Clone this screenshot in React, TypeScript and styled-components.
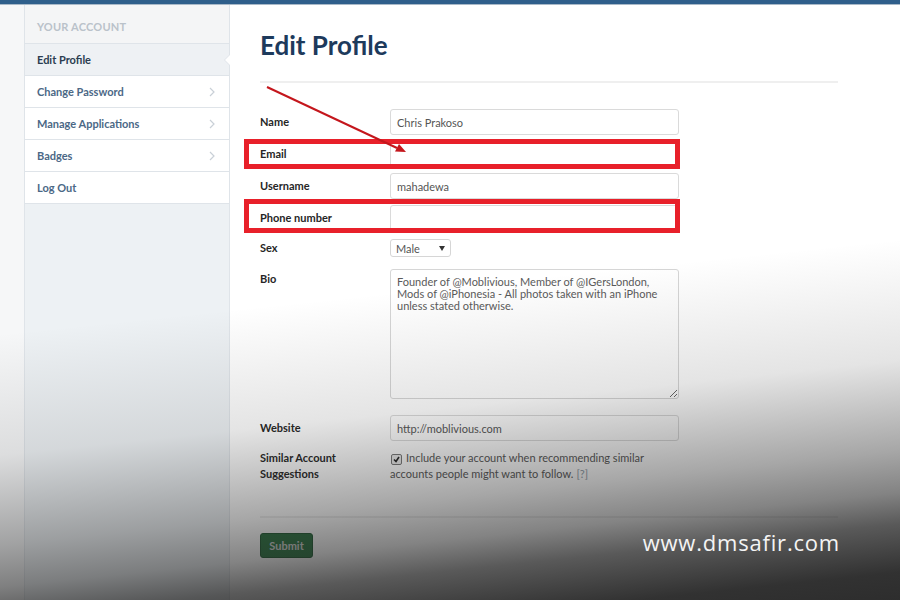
import React from "react";
import styled, { createGlobalStyle } from "styled-components";

const GlobalStyle = createGlobalStyle`
  html, body {
    margin: 0;
    padding: 0;
  }
  body {
    font-family: Lato, "Open Sans", "Liberation Sans", sans-serif;
    background: #f6f7f8;
  }
`;

const Screen = styled.div`
  position: relative;
  width: 900px;
  height: 600px;
  overflow: hidden;
  display: flex;
  flex-direction: column;
  background: #f6f7f8;
`;

const TopBar = styled.div`
  flex-shrink: 0;
  height: 4px;
  background: #2f5f8b;
  border-bottom: 1px solid #a9b9c8;
`;

const Layout = styled.div`
  flex: 1;
  display: flex;
  padding-left: 24px;
`;

const Sidebar = styled.nav`
  width: 204px;
  background: #edf1f4;
  border-left: 1px solid #dfe4e9;
  border-right: 1px solid #dfe4e9;
`;

const SideHeader = styled.div`
  height: 38px;
  box-sizing: border-box;
  padding: 6px 0 0 12px;
  line-height: 32px;
  background: #f4f5f6;
  color: #bac2ca;
  font-size: 11px;
  font-weight: 700;
  text-transform: uppercase;
  letter-spacing: 0.2px;
`;

const NavItem = styled.div<{ $active?: boolean }>`
  position: relative;
  height: 31px;
  display: flex;
  align-items: center;
  justify-content: space-between;
  padding: 0 14px 0 12px;
  border-top: 1px solid #dfe4e9;
  background: ${({ $active }) => ($active ? "#eef1f4" : "#ffffff")};
  color: ${({ $active }) => ($active ? "#2b3d50" : "#4b6886")};
  font-size: 11px;
  font-weight: 700;

  &:last-child {
    border-bottom: 1px solid #dfe4e9;
  }

  /* little notch pointing at the open page */
  ${({ $active }) =>
    $active &&
    `
    &::before,
    &::after {
      content: "";
      position: absolute;
      top: 50%;
      border-style: solid;
      border-color: transparent;
    }
    &::before {
      right: -1px;
      margin-top: -6px;
      border-width: 6px 6px 6px 0;
      border-right-color: #dfe4e9;
    }
    &::after {
      right: -1px;
      margin-top: -5px;
      border-width: 5px 5px 5px 0;
      border-right-color: #ffffff;
    }
  `}
`;

const Chevron = () => (
  <svg width="6" height="10" viewBox="0 0 6 10">
    <polyline
      points="1,1 5,5 1,9"
      fill="none"
      stroke="#c9d0d7"
      strokeWidth="1.2"
    />
  </svg>
);

const Main = styled.main`
  flex: 1;
  background: #ffffff;
  padding: 0 62px 0 30px;
`;

const Title = styled.h1`
  margin: 24px 0 0;
  line-height: 32px;
  font-size: 26px;
  font-weight: 700;
  color: #1d3a5c;
`;

const Divider = styled.div<{ $top: number }>`
  height: 2px;
  margin-top: ${({ $top }) => $top}px;
  background: #efefef;
`;

const Field = styled.div<{ $gap: number; $top?: boolean }>`
  position: relative;
  width: 419px;
  display: flex;
  align-items: ${({ $top }) => ($top ? "flex-start" : "center")};
  margin-top: ${({ $gap }) => $gap}px;
`;

const Label = styled.div<{ $pad?: number }>`
  width: 130px;
  flex-shrink: 0;
  padding-top: ${({ $pad }) => $pad || 0}px;
  font-size: 11px;
  line-height: 16px;
  font-weight: 700;
  color: #262626;
`;

const TextInput = styled.div`
  width: 289px;
  height: 26px;
  box-sizing: border-box;
  display: flex;
  align-items: center;
  padding: 0 6px;
  border: 1px solid #dadada;
  border-radius: 3px;
  background: #ffffff;
  font-size: 11px;
  color: #555555;
`;

const SelectBox = styled.div`
  width: 61px;
  height: 18px;
  box-sizing: border-box;
  display: flex;
  align-items: center;
  justify-content: space-between;
  padding: 0 5px;
  border: 1px solid #d6d6d6;
  border-radius: 3px;
  background: #ffffff;
  font-size: 11px;
  color: #555555;
`;

const Caret = styled.span`
  width: 0;
  height: 0;
  border-left: 3px solid transparent;
  border-right: 3px solid transparent;
  border-top: 5px solid #333333;
`;

const BioArea = styled.textarea`
  width: 289px;
  height: 130px;
  box-sizing: border-box;
  margin: 0;
  padding: 6px 6px;
  border: 1px solid #d6d6d6;
  border-radius: 3px;
  font-family: inherit;
  font-size: 11px;
  line-height: 12px;
  color: #5a5a5a;
  resize: both;
  outline: none;
`;

const CheckText = styled.div`
  width: 289px;
  font-size: 11px;
  line-height: 16px;
  color: #555555;
`;

const Check = styled.span`
  display: inline-flex;
  align-items: center;
  justify-content: center;
  width: 9px;
  height: 9px;
  margin: 0 4px 0 1px;
  vertical-align: -1px;
  border: 1px solid #777777;
  border-radius: 2px;
  background: #ececec;
`;

const Help = styled.span`
  margin-left: 3px;
  color: #8d9aa6;
`;

const Highlight = styled.div<{ $top: number; $bottom: number }>`
  position: absolute;
  left: -16px;
  right: -1px;
  top: ${({ $top }) => -$top}px;
  bottom: ${({ $bottom }) => -$bottom}px;
  border: 5px solid #e8202a;
  pointer-events: none;
`;

const SubmitButton = styled.button`
  margin-top: 15px;
  width: 53px;
  height: 25px;
  padding: 0;
  border: 1px solid #1f5a31;
  border-radius: 3px;
  background: #2a7440;
  color: #d4d4d4;
  font-family: inherit;
  font-size: 11px;
  font-weight: 700;
`;

const Arrow = styled.svg`
  position: absolute;
  left: 0;
  top: 0;
  pointer-events: none;
`;

const Shade = styled.div`
  position: absolute;
  inset: 0;
  z-index: 2;
  pointer-events: none;
  background: linear-gradient(
    174deg,
    rgba(34, 34, 34, 0) 48%,
    rgba(34, 34, 34, 0.12) 65.5%,
    rgba(34, 34, 34, 0.4) 78.5%,
    rgba(34, 34, 34, 0.56) 84.5%,
    rgba(34, 34, 34, 0.75) 89%,
    rgba(34, 34, 34, 0.93) 96%,
    rgba(34, 34, 34, 0.95) 100%
  );
`;

const SiteMark = styled.div`
  position: absolute;
  right: 60px;
  top: 527px;
  z-index: 3;
  font-family: "Open Sans", "DejaVu Sans", sans-serif;
  font-size: 22px;
  letter-spacing: 0.8px;
  color: #f4f4f4;
`;

const navItems = [
  { label: "Edit Profile", active: true, more: false },
  { label: "Change Password", active: false, more: true },
  { label: "Manage Applications", active: false, more: true },
  { label: "Badges", active: false, more: true },
  { label: "Log Out", active: false, more: false },
];

const App: React.FC = () => (
  <>
    <GlobalStyle />
    <Screen>
      <TopBar />
      <Layout>
        <Sidebar>
          <SideHeader>Your Account</SideHeader>
          {navItems.map((item) => (
            <NavItem key={item.label} $active={item.active}>
              {item.label}
              {item.more && <Chevron />}
            </NavItem>
          ))}
        </Sidebar>
        <Main>
          <Title>Edit Profile</Title>
          <Divider $top={20} />

          <Field $gap={26}>
            <Label>Name</Label>
            <TextInput>Chris Prakoso</TextInput>
          </Field>
          <Field $gap={6}>
            <Label>Email</Label>
            <TextInput />
            <Highlight $top={2} $bottom={2} />
          </Field>
          <Field $gap={6}>
            <Label>Username</Label>
            <TextInput>mahadewa</TextInput>
          </Field>
          <Field $gap={6}>
            <Label>Phone number</Label>
            <TextInput />
            <Highlight $top={6} $bottom={2} />
          </Field>
          <Field $gap={8}>
            <Label>Sex</Label>
            <SelectBox>
              Male
              <Caret />
            </SelectBox>
          </Field>
          <Field $gap={12} $top>
            <Label $pad={2}>Bio</Label>
            <BioArea
              readOnly
              value="Founder of @Moblivious, Member of @IGersLondon, Mods of @iPhonesia - All photos taken with an iPhone unless stated otherwise."
            />
          </Field>
          <Field $gap={16}>
            <Label>Website</Label>
            <TextInput>http://moblivious.com</TextInput>
          </Field>
          <Field $gap={9} $top>
            <Label>
              Similar Account
              <br />
              Suggestions
            </Label>
            <CheckText>
              <Check>
                <svg width="7" height="7" viewBox="0 0 7 7">
                  <polyline
                    points="1,3.5 3,5.5 6,1"
                    fill="none"
                    stroke="#222"
                    strokeWidth="1.6"
                  />
                </svg>
              </Check>
              Include your account when recommending similar accounts people
              might want to follow.
              <Help>[?]</Help>
            </CheckText>
          </Field>

          <Divider $top={34} />
          <SubmitButton>Submit</SubmitButton>
        </Main>
      </Layout>

      <Arrow width="900" height="600" viewBox="0 0 900 600">
        <line
          x1="267"
          y1="87"
          x2="397"
          y2="148"
          stroke="#c4161c"
          strokeWidth="2"
        />
        <polygon points="406,152 395,151.5 399,144" fill="#c4161c" />
      </Arrow>

      <Shade />
      <SiteMark>www.dmsafir.com</SiteMark>
    </Screen>
  </>
);

export default App;
